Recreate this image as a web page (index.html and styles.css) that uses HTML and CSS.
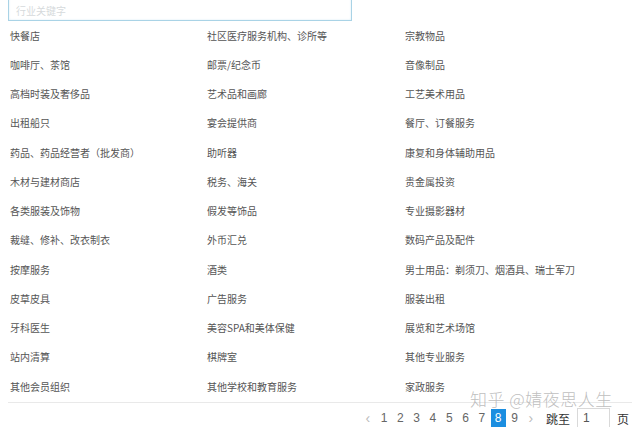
FILE: index.html
```html
<!DOCTYPE html>
<html lang="zh-CN">
<head>
  <meta charset="UTF-8">
  <title>行业类目</title>
  <link rel="stylesheet" href="styles.css">
</head>
<body>
  <div class="search">
    <input type="text" class="search-input" placeholder="行业关键字">
  </div>

  <ul class="category-list">
    <li>快餐店</li>
    <li>社区医疗服务机构、诊所等</li>
    <li>宗教物品</li>
    <li>咖啡厅、茶馆</li>
    <li>邮票/纪念币</li>
    <li>音像制品</li>
    <li>高档时装及奢侈品</li>
    <li>艺术品和画廊</li>
    <li>工艺美术用品</li>
    <li>出租船只</li>
    <li>宴会提供商</li>
    <li>餐厅、订餐服务</li>
    <li>药品、药品经营者（批发商）</li>
    <li>助听器</li>
    <li>康复和身体辅助用品</li>
    <li>木材与建材商店</li>
    <li>税务、海关</li>
    <li>贵金属投资</li>
    <li>各类服装及饰物</li>
    <li>假发等饰品</li>
    <li>专业摄影器材</li>
    <li>裁缝、修补、改衣制衣</li>
    <li>外币汇兑</li>
    <li>数码产品及配件</li>
    <li>按摩服务</li>
    <li>酒类</li>
    <li>男士用品：剃须刀、烟酒具、瑞士军刀</li>
    <li>皮草皮具</li>
    <li>广告服务</li>
    <li>服装出租</li>
    <li>牙科医生</li>
    <li>美容SPA和美体保健</li>
    <li>展览和艺术场馆</li>
    <li>站内清算</li>
    <li>棋牌室</li>
    <li>其他专业服务</li>
    <li>其他会员组织</li>
    <li>其他学校和教育服务</li>
    <li>家政服务</li>
  </ul>

  <div class="pager">
    <span class="pager-item pager-arrow">&lsaquo;</span>
    <span class="pager-item">1</span>
    <span class="pager-item">2</span>
    <span class="pager-item">3</span>
    <span class="pager-item">4</span>
    <span class="pager-item">5</span>
    <span class="pager-item">6</span>
    <span class="pager-item">7</span>
    <span class="pager-item active">8</span>
    <span class="pager-item">9</span>
    <span class="pager-item pager-arrow">&rsaquo;</span>
    <span class="pager-jump">跳至</span>
    <span class="pager-input">1</span>
    <span class="pager-jump">页</span>
  </div>

  <!-- watermark -->
  <div class="watermark">知乎 @婧夜思人生</div>
</body>
</html>
```

FILE: styles.css
```css
body {
  margin: 0;
  width: 640px;
  height: 427px;
  overflow: hidden;
  background: #fff;
  font-family: "Noto Sans CJK SC", "Microsoft YaHei", sans-serif;
  color: #555;
  position: relative;
}

.search {
  margin: -10px 0 0 8px;
  width: 344px;
}

.search-input {
  box-sizing: border-box;
  width: 100%;
  height: 31px;
  padding: 10px 7px 0;
  border: 1px solid #a9d3e6;
  box-shadow: inset 0 0 2px rgba(120, 190, 225, 0.35);
  font-family: inherit;
  font-size: 10px;
  outline: none;
}

.search-input::placeholder {
  color: #d6dadc;
}

.category-list {
  list-style: none;
  margin: 0;
  padding: 0 0 0 10px;
  display: grid;
  grid-template-columns: 197px 198px 1fr;
  grid-auto-rows: 29.25px;
  align-items: center;
  font-size: 10px;
  line-height: 14px;
}

.category-list li {
  white-space: nowrap;
}

.pager {
  margin: 1px 8px 0;
  border-top: 1px solid #e9e9e9;
  padding: 5px 3px 0 0;
  display: flex;
  justify-content: flex-end;
  align-items: center;
  font-family: "Liberation Sans", "Noto Sans CJK SC", sans-serif;
  font-size: 12px;
  color: #666;
}

.pager-item {
  width: 16.3px;
  height: 19px;
  line-height: 19px;
  text-align: center;
}

.pager-arrow {
  color: #bbb;
  font-size: 14px;
}

.pager-item.active {
  width: 15px;
  margin: 0 0.7px;
  background: #1b8ee0;
  color: #fff;
}

.pager-jump {
  margin-left: 7px;
  color: #333;
  font-family: "Noto Sans CJK SC", sans-serif;
}

.pager-input {
  box-sizing: border-box;
  width: 33px;
  height: 20px;
  margin-left: 7px;
  padding-left: 5px;
  line-height: 18px;
  border: 1px solid #d9d9d9;
  color: #555;
}

.watermark {
  position: absolute;
  left: 470px;
  top: 389px;
  font-size: 17px;
  line-height: 20px;
  letter-spacing: 0.5px;
  color: rgba(170, 170, 170, 0.75);
  font-weight: 300;
  white-space: nowrap;
}
```
